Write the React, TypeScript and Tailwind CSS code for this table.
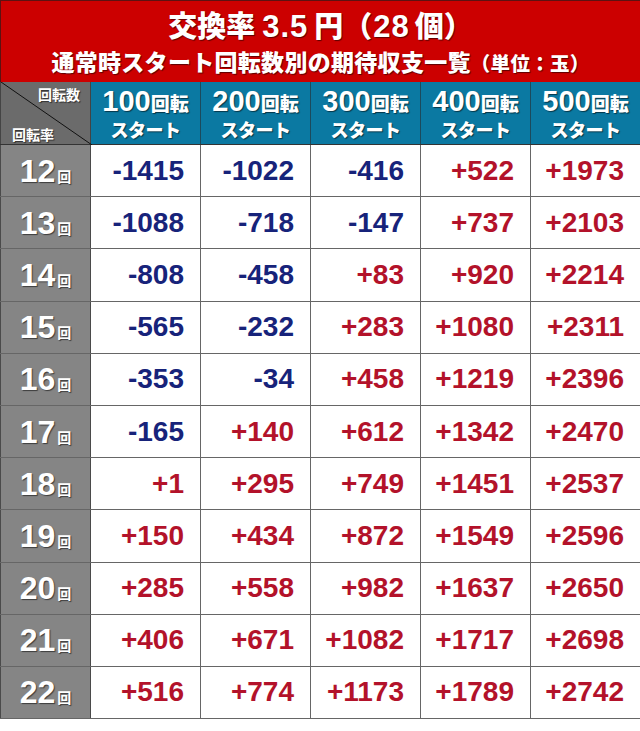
import React from 'react';

const rows: { rate: number; values: number[] }[] = [
  { rate: 12, values: [-1415, -1022, -416, 522, 1973] },
  { rate: 13, values: [-1088, -718, -147, 737, 2103] },
  { rate: 14, values: [-808, -458, 83, 920, 2214] },
  { rate: 15, values: [-565, -232, 283, 1080, 2311] },
  { rate: 16, values: [-353, -34, 458, 1219, 2396] },
  { rate: 17, values: [-165, 140, 612, 1342, 2470] },
  { rate: 18, values: [1, 295, 749, 1451, 2537] },
  { rate: 19, values: [150, 434, 872, 1549, 2596] },
  { rate: 20, values: [285, 558, 982, 1637, 2650] },
  { rate: 21, values: [406, 671, 1082, 1717, 2698] },
  { rate: 22, values: [516, 774, 1173, 1789, 2742] },
];

const starts = [100, 200, 300, 400, 500];

const FONT = "font-['Liberation_Sans','Noto_Sans_CJK_JP',sans-serif]";
const SHADOW = '[text-shadow:1px_1px_1px_rgba(0,0,0,0.55)]';

function fmt(v: number) {
  return v > 0 ? `+${v}` : `${v}`;
}

export default function App() {
  return (
    <div className={`w-[640px] h-[731px] bg-white ${FONT}`}>
      {/* タイトル */}
      <div className={`h-[82px] bg-[#cc0000] border-t border-l border-[#5c1212] flex flex-col items-center text-white font-bold ${SHADOW}`}>
        <div className="flex items-baseline text-[29px] leading-none mt-[10px] font-black">
          <span>交換率</span>
          <span className="text-[31px] font-bold ml-[7px] tracking-[1px]">3.5</span>
          <span className="ml-[6px]">円（</span>
          <span className="text-[31px] font-bold tracking-[1px] ml-[1px]">28</span>
          <span className="ml-[5px]">個）</span>
        </div>
        <div className="text-[23px] leading-none mt-[10px] font-black tracking-[0.3px]">
          通常時スタート回転数別の期待収支一覧<span className="text-[19.5px]">（単位：玉）</span>
        </div>
      </div>

      {/* ヘッダー行 */}
      <div className="flex h-[63px] border-b border-[#333]">
        <div className="relative w-[91px] shrink-0 bg-[#6b6b6b] border-l border-r border-[#444] flex flex-col justify-between px-[10px] pt-[5px] pb-[2px] text-white font-bold text-[14px] leading-none">
          <svg className="absolute inset-0" width="91" height="63" viewBox="0 0 91 63">
            <line x1="0" y1="0" x2="91" y2="63" stroke="#111" strokeWidth="1" />
          </svg>
          <span className={`relative self-end mt-[1px] ${SHADOW}`}>回転数</span>
          <span className={`relative self-start ml-[1px] ${SHADOW}`}>回転率</span>
        </div>
        {starts.map((s, i) => (
          <div
            key={s}
            className={`flex-1 bg-[#0b79a2] ${i > 0 ? 'border-l border-[#1c4a5c]' : ''} flex flex-col items-center justify-center text-white font-bold leading-none ${SHADOW}`}
          >
            <div className="flex items-end">
              <span className="text-[29px]">{s}</span>
              <span className="text-[19px] mb-[2px] font-black">回転</span>
            </div>
            <span className="text-[18px] mt-[6px] tracking-[-0.5px] font-black">スタート</span>
          </div>
        ))}
      </div>

      {/* データ行 */}
      {rows.map((r) => (
        <div key={r.rate} className="flex h-[52.2px] border-b border-[#666]">
          <div className="w-[91px] shrink-0 bg-[#858585] border-l border-r border-[#4a4a4a] flex items-center justify-center text-white font-bold">
            <span className={`text-[32px] leading-none ${SHADOW}`}>{r.rate}</span>
            <span className={`text-[14px] leading-none ml-[2px] mt-[12px] ${SHADOW}`}>回</span>
          </div>
          {r.values.map((v, i) => (
            <div
              key={i}
              className={`flex-1 ${i > 0 ? 'border-l border-[#666]' : ''} flex items-center justify-end pr-[16px] text-[28px] font-bold leading-none ${v < 0 ? 'text-[#17237a]' : 'text-[#b3122a]'}`}
            >
              {fmt(v)}
            </div>
          ))}
        </div>
      ))}
    </div>
  );
}
